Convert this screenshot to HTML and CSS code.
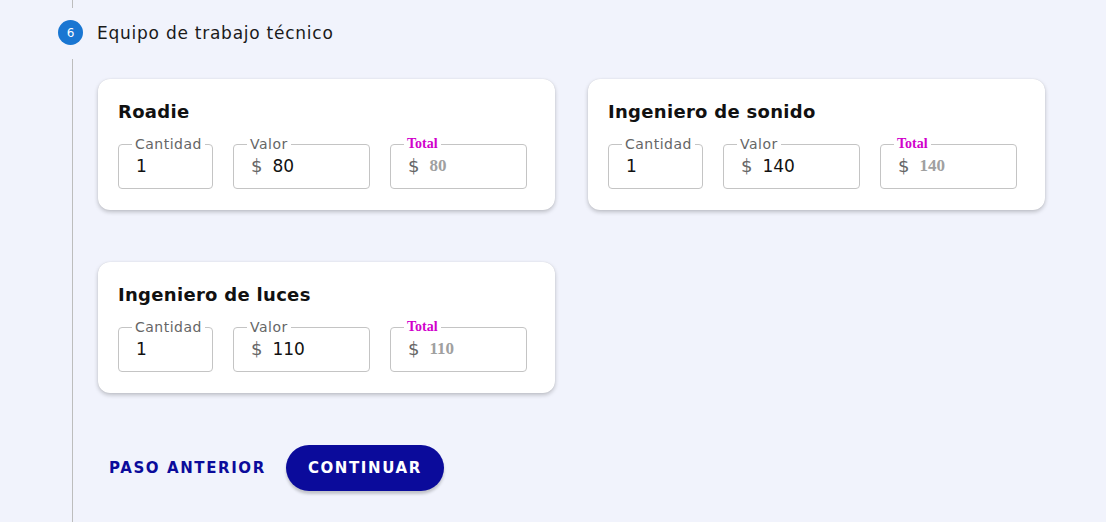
FILE: index.html
```html
<!DOCTYPE html>
<html lang="es">
<head>
  <meta charset="UTF-8">
  <meta name="viewport" content="width=device-width, initial-scale=1.0">
  <title>Equipo de trabajo técnico</title>
  <link rel="stylesheet" href="styles.css">
</head>
<body>

<div class="stepper">
  <div class="connector-top"></div>

  <div class="step-head">
    <span class="step-icon">6</span>
    <span class="step-title">Equipo de trabajo técnico</span>
  </div>

  <div class="step-body">
    <div class="cards">
      <div class="card">
        <h2>Roadie</h2>
        <div class="fields">
          <fieldset class="field qty"><legend>Cantidad</legend><span class="value">1</span></fieldset>
          <fieldset class="field money"><legend>Valor</legend><span class="dollar">$</span><span class="value">80</span></fieldset>
          <fieldset class="field money total"><legend>Total</legend><span class="dollar">$</span><span class="value">80</span></fieldset>
        </div>
      </div>

      <div class="card">
        <h2>Ingeniero de sonido</h2>
        <div class="fields">
          <fieldset class="field qty"><legend>Cantidad</legend><span class="value">1</span></fieldset>
          <fieldset class="field money"><legend>Valor</legend><span class="dollar">$</span><span class="value">140</span></fieldset>
          <fieldset class="field money total"><legend>Total</legend><span class="dollar">$</span><span class="value">140</span></fieldset>
        </div>
      </div>

      <div class="card">
        <h2>Ingeniero de luces</h2>
        <div class="fields">
          <fieldset class="field qty"><legend>Cantidad</legend><span class="value">1</span></fieldset>
          <fieldset class="field money"><legend>Valor</legend><span class="dollar">$</span><span class="value">110</span></fieldset>
          <fieldset class="field money total"><legend>Total</legend><span class="dollar">$</span><span class="value">110</span></fieldset>
        </div>
      </div>
    </div>

    <div class="actions">
      <button class="back-btn">Paso anterior</button>
      <button class="next-btn">Continuar</button>
    </div>
  </div>
</div>

</body>
</html>
```

FILE: styles.css
```css
body {
  margin: 0;
  padding: 0;
  background: #f1f3fc;
  font-family: 'DejaVu Sans', sans-serif;
  color: #111;
}

.stepper {
  min-height: 522px;
  display: flex;
  flex-direction: column;
}

.connector-top {
  height: 8px;
  margin-left: 72px;
  border-left: 1px solid #bdbdbd;
}

.step-head {
  display: flex;
  align-items: center;
  gap: 14px;
  padding: 12px 0 14px 58px;
}

.step-icon {
  width: 25px;
  height: 25px;
  border-radius: 50%;
  background: #1976d2;
  color: #fff;
  font-size: 12px;
  display: flex;
  align-items: center;
  justify-content: center;
}

.step-title {
  font-size: 17px;
  letter-spacing: 0.75px;
  color: #1a1a1a;
}

.step-body {
  flex: 1;
  margin-left: 72px;
  border-left: 1px solid #bdbdbd;
  padding: 20px 0 0 25px;
}

.cards {
  display: grid;
  grid-template-columns: 457px 457px;
  column-gap: 33px;
  row-gap: 52px;
}

.card {
  background: #fff;
  border-radius: 12px;
  box-shadow: 0 2px 4px rgba(0,0,0,0.22), 0 0 1px rgba(0,0,0,0.12);
  padding: 21px 28px 21px 20px;
}

.card h2 {
  margin: 0 0 12px 0;
  font-size: 18px;
  line-height: 24px;
  font-weight: bold;
  letter-spacing: 0.3px;
}

.fields {
  display: flex;
  gap: 20px;
}

.field {
  margin: 0;
  padding: 0 17px 8px 17px;
  border: 1px solid #c4c4c4;
  border-radius: 4px;
  min-width: 0;
  display: flex;
  align-items: center;
}

.field legend {
  font-size: 14px;
  line-height: 16px;
  letter-spacing: 0.5px;
  color: #666;
  padding: 0 3px;
  margin-left: -4px;
}

.qty { width: 59px; }
.money { width: 101px; }

.value {
  font-size: 17px;
  line-height: 28px;
  color: #111;
}

.dollar {
  font-size: 18px;
  line-height: 28px;
  color: #666;
  margin-right: 10px;
}

.total legend {
  font-family: 'Liberation Serif', serif;
  font-weight: bold;
  font-size: 14px;
  letter-spacing: 0;
  color: #d100cc;
}

.total .value {
  font-family: 'Liberation Serif', serif;
  font-weight: bold;
  color: #a0a0a0;
}

.actions {
  display: flex;
  align-items: center;
  gap: 9px;
  margin-top: 52px;
}

button {
  font-family: 'DejaVu Sans', sans-serif;
  font-size: 15px;
  font-weight: bold;
  text-transform: uppercase;
  letter-spacing: 1.6px;
  border: none;
  cursor: pointer;
}

.back-btn {
  background: none;
  color: #0b0b9b;
  padding: 12px 11px;
}

.next-btn {
  background: #0b0b9b;
  color: #fff;
  height: 46px;
  padding: 0 22px;
  border-radius: 23px;
  box-shadow: 0 3px 3px rgba(0,0,0,0.2);
}
```
